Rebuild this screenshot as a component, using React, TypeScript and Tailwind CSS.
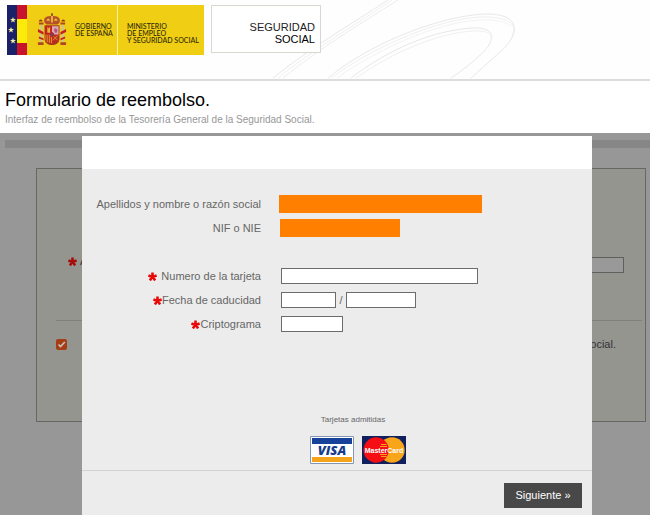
import React from "react";

const sans = "font-['Liberation_Sans',Arial,sans-serif]";

function Star({ className = "" }: { className?: string }) {
  return (
    <svg viewBox="0 0 9 9" className={`h-[9px] w-[9px] shrink-0 ${className}`} aria-hidden="true">
      <g stroke="currentColor" strokeWidth="2.6">
        <path d="M4.5 5V.4M4.5 5L.4 3.4M4.5 5L8.6 3.4M4.5 4.6L1.9 8.4M4.5 4.6L7.1 8.4" />
      </g>
    </svg>
  );
}

function CoatOfArms() {
  return (
    <svg viewBox="0 0 32 36" className="h-[34px] w-[30px] shrink-0" aria-hidden="true">
      <path d="M3 12h3v19H3zM26 12h3v19h-3z" fill="#d3c38a" />
      <path d="M2 10h5v2H2zM25 10h5v2h-5zM1 31h6v3H1zM25 31h6v3h-6z" fill="#b0471f" />
      <path d="M2 9c0-3 4-3 4 0zM26 9c0-3 4-3 4 0z" fill="#9a3c1c" />
      <path d="M1 17l6 3v3l-6-3zM31 17l-6 3v3l6-3zM2 25l5 2v2l-5-2zM30 25l-5 2v2l5-2z" fill="#c4231c" />
      <path d="M8 10c-2-6 3-7 8-7s10 1 8 7l-2 2H10z" fill="#b8502a" />
      <path d="M10 8c1-3 3-3 4 0zM18 8c1-3 3-3 4 0zM15 3h2v7h-2z" fill="#e6b83c" />
      <path d="M15 0h2v3h-2z" fill="#8a5a22" />
      <path d="M8 13h16v14c0 5-4 7-8 7s-8-2-8-7z" fill="#a8391f" />
      <path d="M9 14h7v9H9z" fill="#c5221f" />
      <path d="M16 14h7v9h-7z" fill="#dfa9b4" />
      <path d="M11 16h3v5h-3zM11 15h1v2h-1zM13 15h1v2h-1z" fill="#e6b63a" />
      <path d="M18 17l2-1 2 2-1 3h-2z" fill="#b3537f" />
      <path d="M9 23h7v9c-5 0-7-2-7-5z" fill="#d99a2a" />
      <path d="M10 23h1v8h-1zM12 23h1v9h-1zM14 23h1v9h-1z" fill="#c5221f" />
      <path d="M16 23h7v4c0 3-2 5-7 5z" fill="#bd2a20" />
      <path d="M17 24l5 5M22 24l-5 5" stroke="#d8992c" />
      <ellipse cx="16" cy="23" rx="1.8" ry="2.3" fill="#5b4a7a" stroke="#c5221f" />
    </svg>
  );
}

function Flags() {
  const star = "M0-3L.8-1H3L1.2.3 1.9 2.6 0 1.2-1.9 2.6-1.2.3-3-1H-.8z";
  return (
    <svg viewBox="0 0 20 50" className="h-[50px] w-5 shrink-0" aria-hidden="true">
      <path d="M0 0h10v50H0z" fill="#1b2168" />
      <path d="M10 0h10v50H10z" fill="#c9122b" />
      <path d="M10 14h10v24H10z" fill="#fcea0a" />
      <g fill="#fbf0a0">
        <path d={star} transform="translate(6 15)" />
        <path d={star} transform="translate(4 25)" />
        <path d={star} transform="translate(6 36)" />
      </g>
    </svg>
  );
}

function Swirl() {
  return (
    <svg viewBox="270 0 380 79" className="absolute left-[270px] top-0 h-[79px] w-[380px]" fill="none" aria-hidden="true">
      <g stroke="#e8e8e8">
        <path d="M273 78C310 48 350 25 388 0" />
        <path d="M278 78C315 48 354 26 392 0" stroke="#f0f0f0" />
        <path d="M283 78C320 48 360 24 398 0" stroke="#ededed" />
        <path d="M328 78C370 43 440 16 485 14C520 13 522 33 500 52C490 61 480 70 471 78" />
        <path d="M331 78C376 45 440 19 480 17C510 16 518 26 512 35" stroke="#f0f0f0" />
        <path d="M337 78C382 46 440 22 480 20C498 19 507 22 511 27" stroke="#f3f3f3" />
        <path d="M351 78C390 48 435 30 473 28C498 27 496 42 478 57C468 66 460 72 451 78" />
        <path d="M356 78C396 50 440 33 473 31C487 30 492 34 491 39" stroke="#f0f0f0" />
      </g>
    </svg>
  );
}

function Header() {
  return (
    <header className="relative flex h-[81px] items-start gap-[7px] overflow-hidden border-b-2 border-[#dcdcdc] bg-[#fefefe] pl-[7px] pt-[5px]">
      <Swirl />
      <div className="relative flex h-[50px] w-[197px] bg-[#efce13] font-['Lato',sans-serif] text-[7px] font-medium leading-[7px] text-[#30290a]">
        <Flags />
        <div className="flex w-[91px] items-center gap-2 border-r border-[#fbf0a8] pl-[10px]">
          <CoatOfArms />
          <p className="whitespace-nowrap">GOBIERNO<br />DE ESPAÑA</p>
        </div>
        <p className="whitespace-nowrap pl-[9px] pt-[18px]">
          MINISTERIO<br />DE EMPLEO<br />Y SEGURIDAD SOCIAL
        </p>
      </div>
      <div className="relative flex h-12 w-[110px] flex-col items-end border border-[#d8d8d0] bg-white pr-[5px] pt-[15px] text-[11px] leading-[12px] text-[#222]">
        <span>SEGURIDAD</span>
        <span className="text-black">SOCIAL</span>
      </div>
    </header>
  );
}

function BackgroundForm() {
  return (
    <div className="pl-[5px] pt-[7px]">
      <div className="h-2 bg-[#878787]" />
      <div className="ml-[31px] mr-1 mt-5 h-[254px] border border-[#666865] bg-[#959590] pl-[19px] pr-[3px] pt-[84px] text-[11px] text-[#333]">
        <div className="flex h-6 items-center pl-3 pr-[18px]">
          <Star className="-mt-2 text-[#a50d0d]" />
          <label htmlFor="bg-name" className="-mt-2 pl-[3px]">A</label>
          <input id="bg-name" className="ml-auto h-4 w-28 border border-[#5f5f5f] bg-[#999]" />
        </div>
        <hr className="mt-[43px] border-t border-[#80807b]" />
        <div className="mt-[15px] flex h-4 items-center justify-between pr-[26px]">
          <span className="relative flex h-[11px] w-[11px]">
            <input id="bg-accept" type="checkbox" defaultChecked className="h-[11px] w-[11px] appearance-none rounded-xs bg-[#a53e16]" />
            <svg viewBox="0 0 11 11" className="pointer-events-none absolute inset-0" aria-hidden="true">
              <path d="M2.5 5.5L4.5 7.5L8.8 3" fill="none" stroke="#c9c5bd" strokeWidth="1.6" />
            </svg>
          </span>
          <label htmlFor="bg-accept">social.</label>
        </div>
      </div>
    </div>
  );
}

function VisaCard() {
  return (
    <svg viewBox="0 0 44 28" className="h-7 w-11" role="img" aria-label="Visa">
      <path d="M.5.5h43v27H.5z" fill="#fff" stroke="#8496b5" />
      <path d="M2 2h40v6H2z" fill="#16429a" />
      <path d="M2 21h40v5H2z" fill="#f5a31a" />
      <text x="22" y="19" textAnchor="middle" fontFamily="Open Sans, sans-serif" fontSize="13" fontWeight="800" fontStyle="italic" fill="#173b8c">VISA</text>
    </svg>
  );
}

function MasterCard() {
  return (
    <svg viewBox="0 0 44 28" className="h-7 w-11" role="img" aria-label="MasterCard">
      <path d="M0 0h44v28H0z" fill="#10205f" />
      <circle cx="30" cy="14" r="12.7" fill="#f9a51a" />
      <path d="M22 4a12.7 12.7 0 1 0 0 20a12.7 12.7 0 0 0 0-20z" fill="#f50f14" />
      <path d="M19 8.5h5.500M18 10.500h7M18 18.500h7M19 20.500h5.500" stroke="#f9a51a" />
      <text x="22" y="17" textAnchor="middle" fontFamily="Liberation Sans, sans-serif" fontSize="7" fontWeight="700" fill="#fff">MasterCard</text>
    </svg>
  );
}

const field = "border border-[#6c6c6c] bg-white px-1 outline-none";

function Row({ label, id, required, spaced, children }: { label: string; id: string; required?: boolean; spaced?: boolean; children: React.ReactNode }) {
  return (
    <div className="flex h-6 items-center">
      <label htmlFor={id} className={`flex w-[179px] shrink-0 items-center justify-end whitespace-nowrap ${spaced ? "gap-1" : ""}`}>
        {required && <Star className="text-[#e80808]" />}
        <span>{label}</span>
      </label>
      {children}
    </div>
  );
}

function PaymentDialog() {
  return (
    <section role="dialog" aria-label="Datos de la tarjeta" className="absolute bottom-0 left-[82px] right-[58px] top-[3px] flex flex-col bg-[#ececec] text-[11px] text-[#666]">
      <div className="h-[33px] bg-white" />
      <form className="flex flex-1 flex-col" onSubmit={(e) => e.preventDefault()}>
        <div className="pt-[23px]">
          <Row label="Apellidos y nombre o razón social" id="name">
            <output id="name" className="ml-[18px] h-[18px] w-[203px] bg-[#ff8000]" />
          </Row>
          <Row label="NIF o NIE" id="nif">
            <output id="nif" className="ml-[19px] h-[18px] w-[120px] bg-[#ff8000]" />
          </Row>
        </div>
        <div className="pt-6">
          <Row label="Numero de la tarjeta" id="card" required spaced>
            <input id="card" className={`ml-5 h-4 w-[197px] ${field}`} />
          </Row>
          <Row label="Fecha de caducidad" id="month" required>
            <input id="month" className={`ml-5 h-4 w-[55px] ${field}`} />
            <span className="w-[10px] text-center">/</span>
            <input aria-label="Año" className={`h-4 w-[70px] ${field}`} />
          </Row>
          <Row label="Criptograma" id="cvv" required>
            <input id="cvv" className={`ml-5 h-4 w-[62px] ${field}`} />
          </Row>
        </div>
        <div className="mt-auto flex flex-col items-center pb-[6px]">
          <p className="pl-8 text-[8px] leading-[10px]">Tarjetas admitidas</p>
          <div className="mt-[11px] flex gap-2 pl-[42px]">
            <VisaCard />
            <MasterCard />
          </div>
        </div>
        <div className="flex h-[45px] justify-end border-t border-[#d2d2d2] pr-[10px] pt-3">
          <button type="submit" className="h-[25px] w-[78px] bg-[#484848] text-[11px] text-white">Siguiente »</button>
        </div>
      </form>
    </section>
  );
}

export default function App() {
  return (
    <div className={`flex min-h-screen flex-col bg-white ${sans}`}>
      <Header />
      <div className="h-[52px] pl-[5px] pt-[7px]">
        <h1 className="text-[18px] leading-6 text-black">Formulario de reembolso.</h1>
        <p className="pt-px text-[10px] leading-[14px] text-[#979797]">Interfaz de reembolso de la Tesorería General de la Seguridad Social.</p>
      </div>
      <main className="relative min-h-[382px] flex-1 bg-[#979797]">
        <BackgroundForm />
        <PaymentDialog />
      </main>
    </div>
  );
}
